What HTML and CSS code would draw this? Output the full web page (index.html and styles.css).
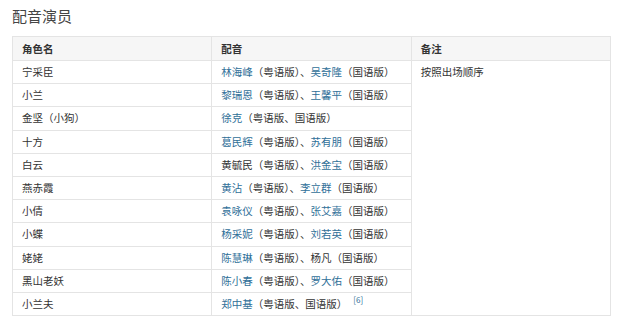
FILE: index.html
```html
<!DOCTYPE html>
<html lang="zh-CN">
<head>
<meta charset="utf-8">
<link rel="stylesheet" href="styles.css">
</head>
<body>
<div class="page">
  <h2 class="title">配音演员</h2>
  <table class="cast">
    <thead>
      <tr><th>角色名</th><th>配音</th><th>备注</th></tr>
    </thead>
    <tbody>
      <tr><td>宁采臣</td><td><a>林海峰</a>（粤语版）、<a>吴奇隆</a>（国语版）</td><td class="note" rowspan="11">按照出场顺序</td></tr>
      <tr><td>小兰</td><td><a>黎瑞恩</a>（粤语版）、<a>王馨平</a>（国语版）</td></tr>
      <tr><td>金坚（小狗）</td><td><a>徐克</a>（粤语版、国语版）</td></tr>
      <tr><td>十方</td><td><a>葛民辉</a>（粤语版）、<a>苏有朋</a>（国语版）</td></tr>
      <tr><td>白云</td><td>黄毓民（粤语版）、<a>洪金宝</a>（国语版）</td></tr>
      <tr><td>燕赤霞</td><td><a>黄沾</a>（粤语版）、<a>李立群</a>（国语版）</td></tr>
      <tr><td>小倩</td><td><a>袁咏仪</a>（粤语版）、<a>张艾嘉</a>（国语版）</td></tr>
      <tr><td>小蝶</td><td><a>杨采妮</a>（粤语版）、<a>刘若英</a>（国语版）</td></tr>
      <tr><td>姥姥</td><td><a>陈慧琳</a>（粤语版）、杨凡（国语版）</td></tr>
      <tr><td>黑山老妖</td><td><a>陈小春</a>（粤语版）、<a>罗大佑</a>（国语版）</td></tr>
      <tr><td>小兰夫</td><td><a>郑中基</a>（粤语版、国语版）<sup class="ref">[6]</sup></td></tr>
    </tbody>
  </table>
</div>
</body>
</html>
```
FILE: styles.css
```css
html, body {
  margin: 0;
  padding: 0;
  background: #ffffff;
}
.page {
  padding: 7px 0 0 12px;
  font-family: "Noto Sans CJK SC", "Microsoft YaHei", sans-serif;
  color: #333333;
}
.title {
  margin: 0 0 11px 0;
  font-size: 15px;
  line-height: 18px;
  font-weight: normal;
  color: #454545;
}
.cast {
  width: 599px;
  border-collapse: collapse;
  table-layout: fixed;
  font-size: 10.5px;
}
.cast th,
.cast td {
  border: 1px solid #e4e4e4;
  padding: 0 9px;
  height: 22.2px;
  line-height: 22px;
  text-align: left;
  white-space: nowrap;
}
.cast th {
  height: 23px;
  line-height: 23px;
  background: #f6f6f6;
  font-weight: bold;
  color: #333333;
}
.cast td {
  color: #333333;
}
.cast a {
  color: #2f6f98;
  text-decoration: none;
}
.cast td.note {
  vertical-align: top;
}
.ref {
  color: #2f6f98;
  font-size: 8px;
  margin-left: 6px;
  vertical-align: 5px;
  line-height: 0;
}
```
